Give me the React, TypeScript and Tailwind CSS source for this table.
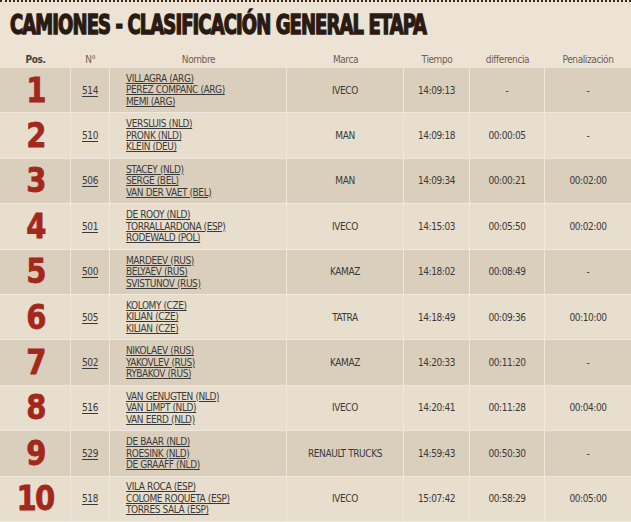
const rows = [
  { pos: '1', num: '514', names: ['VILLAGRA (ARG)', 'PEREZ COMPANC (ARG)', 'MEMI (ARG)'], marca: 'IVECO', tiempo: '14:09:13', dif: '-', pen: '-' },
  { pos: '2', num: '510', names: ['VERSLUIS (NLD)', 'PRONK (NLD)', 'KLEIN (DEU)'], marca: 'MAN', tiempo: '14:09:18', dif: '00:00:05', pen: '-' },
  { pos: '3', num: '506', names: ['STACEY (NLD)', 'SERGE (BEL)', 'VAN DER VAET (BEL)'], marca: 'MAN', tiempo: '14:09:34', dif: '00:00:21', pen: '00:02:00' },
  { pos: '4', num: '501', names: ['DE ROOY (NLD)', 'TORRALLARDONA (ESP)', 'RODEWALD (POL)'], marca: 'IVECO', tiempo: '14:15:03', dif: '00:05:50', pen: '00:02:00' },
  { pos: '5', num: '500', names: ['MARDEEV (RUS)', 'BELYAEV (RUS)', 'SVISTUNOV (RUS)'], marca: 'KAMAZ', tiempo: '14:18:02', dif: '00:08:49', pen: '-' },
  { pos: '6', num: '505', names: ['KOLOMY (CZE)', 'KILIAN (CZE)', 'KILIAN (CZE)'], marca: 'TATRA', tiempo: '14:18:49', dif: '00:09:36', pen: '00:10:00' },
  { pos: '7', num: '502', names: ['NIKOLAEV (RUS)', 'YAKOVLEV (RUS)', 'RYBAKOV (RUS)'], marca: 'KAMAZ', tiempo: '14:20:33', dif: '00:11:20', pen: '-' },
  { pos: '8', num: '516', names: ['VAN GENUGTEN (NLD)', 'VAN LIMPT (NLD)', 'VAN EERD (NLD)'], marca: 'IVECO', tiempo: '14:20:41', dif: '00:11:28', pen: '00:04:00' },
  { pos: '9', num: '529', names: ['DE BAAR (NLD)', 'ROESINK (NLD)', 'DE GRAAFF (NLD)'], marca: 'RENAULT TRUCKS', tiempo: '14:59:43', dif: '00:50:30', pen: '-' },
  { pos: '10', num: '518', names: ['VILA ROCA (ESP)', 'COLOME ROQUETA (ESP)', 'TORRES SALA (ESP)'], marca: 'IVECO', tiempo: '15:07:42', dif: '00:58:29', pen: '00:05:00' },
];

const font = { fontFamily: '"DejaVu Sans Condensed", "DejaVu Sans", sans-serif' };

export default function App() {
  return (
    <div className="w-[631px] h-[522px] overflow-hidden bg-[#ede3d4] border-t-2 border-dotted border-[#3b2a1c]" style={font}>
      {/* Title */}
      <div className="pl-[10px] pt-[8px] h-[48px]">
        <h1
          className="inline-block whitespace-nowrap origin-left scale-x-[0.74] text-[27px] leading-[30px] font-bold tracking-[-1.2px] text-[#2a1a12]"
          style={{ fontFamily: '"DejaVu Sans Condensed", sans-serif', fontWeight: 900, WebkitTextStroke: '1.4px #2a1a12' }}
        >
          CAMIONES - CLASIFICACIÓN GENERAL ETAPA
        </h1>
      </div>

      <div className="grid grid-cols-[71px_39px_177px_117px_66px_75px_86px] text-[10px] tracking-[-0.4px] text-[#3a3a3a]">
        {/* Header */}
        <div className="h-[18px] flex items-center justify-center font-bold text-[#4a4038]">Pos.</div>
        <div className="h-[18px] flex items-center justify-center text-[#6a6058]">N°</div>
        <div className="h-[18px] flex items-center justify-center text-[#6a6058]">Nombre</div>
        <div className="h-[18px] flex items-center justify-center text-[#6a6058]">Marca</div>
        <div className="h-[18px] flex items-center justify-center text-[#6a6058]">Tiempo</div>
        <div className="h-[18px] flex items-center justify-center text-[#6a6058]">differencia</div>
        <div className="h-[18px] flex items-center justify-center text-[#6a6058]">Penalización</div>

        {rows.map((r, i) => {
          const bg = i % 2 === 0 ? 'bg-[#dacfbc]' : 'bg-[#e8decd]';
          const cell = `h-[45.4px] flex items-center justify-center border-r border-b border-[#f0e8dc] ${bg}`;
          return (
            <div key={r.pos} className="contents">
              <div className={cell}>
                <span
                  className="inline-block scale-x-[0.88] text-[33px] leading-none font-bold text-[#a3281b] tracking-[-2px]"
                  style={{ fontFamily: '"DejaVu Sans", sans-serif', fontWeight: 900, WebkitTextStroke: '0.8px #a3281b' }}
                >
                  {r.pos}
                </span>
              </div>
              <div className={cell}>
                <span className="underline underline-offset-2">{r.num}</span>
              </div>
              <div className={`${cell} !justify-start pl-[16px]`}>
                <div className="flex flex-col leading-[11.5px]">
                  {r.names.map((n, k) => (
                    <span key={k} className="underline underline-offset-1">{n}</span>
                  ))}
                </div>
              </div>
              <div className={cell}>{r.marca}</div>
              <div className={cell}>{r.tiempo}</div>
              <div className={cell}>{r.dif}</div>
              <div className={`${cell} border-r-0`}>{r.pen}</div>
            </div>
          );
        })}
      </div>
    </div>
  );
}
